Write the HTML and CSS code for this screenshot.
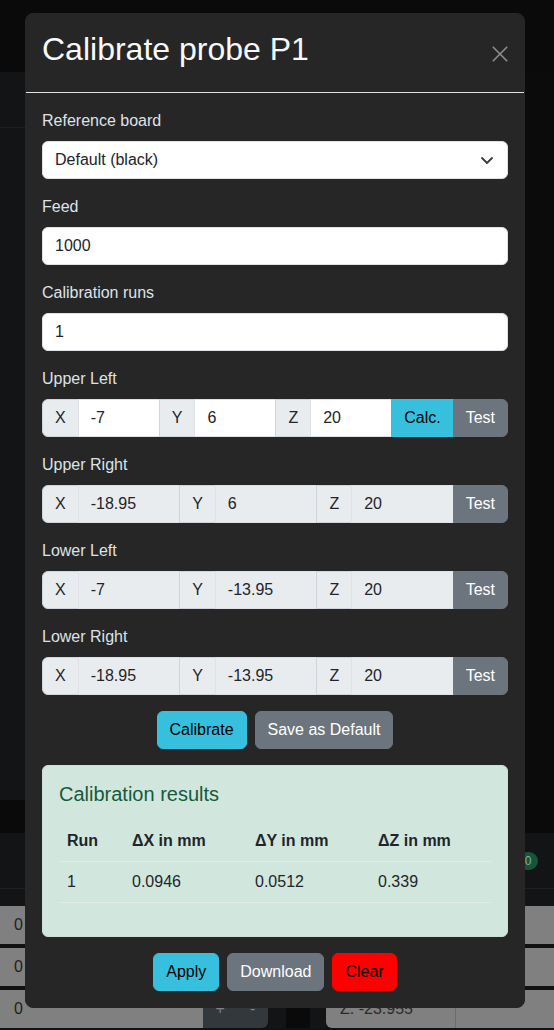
FILE: index.html
```html
<!DOCTYPE html>
<html lang="en">
<head>
<meta charset="utf-8">
<title>Calibrate probe P1</title>
<link rel="stylesheet" href="styles.css">
</head>
<body>
<div class="page-bg">
  <div class="bg-top"></div>
  <div class="bg-main">
    <div class="bg-left"><div class="bg-left-head"></div></div>
    <div class="bg-right"></div>
  </div>
  <div class="bg-strip"></div>
  <div class="bg-cardhead">
    <div class="bg-cardhead-top"><span class="bg-badge">0</span></div>
  </div>
  <div class="bg-rows">
    <div class="bg-row">
      <div class="bg-in bg-in-a">0</div>
      <div class="bg-btns"></div>
      <div class="bg-sp1"></div><div class="bg-sp2"></div><div class="bg-sp1 bg-sp3"></div>
      <div class="bg-in bg-in-b"></div>
      <div class="bg-in bg-in-c"></div>
    </div>
    <div class="bg-row">
      <div class="bg-in bg-in-a">0</div>
      <div class="bg-btns"></div>
      <div class="bg-sp1"></div><div class="bg-sp2"></div><div class="bg-sp1 bg-sp3"></div>
      <div class="bg-in bg-in-b"></div>
      <div class="bg-in bg-in-c"></div>
    </div>
    <div class="bg-row">
      <div class="bg-in bg-in-a">0</div>
      <div class="bg-btns"><span>+</span><span>-</span></div>
      <div class="bg-sp1"></div><div class="bg-sp2"></div><div class="bg-sp1 bg-sp3"></div>
      <div class="bg-in bg-in-b">Z: -23.955</div>
      <div class="bg-in bg-in-c"></div>
    </div>
  </div>
</div>

<div class="modal">
  <div class="modal-header">
    <h1 class="modal-title">Calibrate probe P1</h1>
    <button class="btn-close" type="button" aria-label="Close">
      <svg width="16" height="16" viewBox="0 0 16 16"><path d="M0.8 0.8 15.2 15.2M15.2 0.8 0.8 15.2" stroke="#8e8e8e" stroke-width="1.6" fill="none"/></svg>
    </button>
  </div>
  <div class="modal-body">
    <div class="field">
      <label class="form-label">Reference board</label>
      <div class="form-select">
        <span>Default (black)</span>
        <svg width="16" height="12" viewBox="0 0 16 12"><path d="m3 4 5 5 5-5" fill="none" stroke="#343a40" stroke-width="1.8" stroke-linecap="round" stroke-linejoin="round"/></svg>
      </div>
    </div>
    <div class="field">
      <label class="form-label">Feed</label>
      <input class="form-control" value="1000">
    </div>
    <div class="field">
      <label class="form-label">Calibration runs</label>
      <input class="form-control" value="1">
    </div>

    <div class="field">
      <label class="form-label">Upper Left</label>
      <div class="input-group">
        <span class="ig-text">X</span><input class="ig-input" value="-7">
        <span class="ig-text">Y</span><input class="ig-input" value="6">
        <span class="ig-text">Z</span><input class="ig-input" value="20">
        <button class="btn btn-info" type="button">Calc.</button><button class="btn btn-secondary" type="button">Test</button>
      </div>
    </div>
    <div class="field">
      <label class="form-label">Upper Right</label>
      <div class="input-group">
        <span class="ig-text">X</span><input class="ig-input is-disabled" value="-18.95" disabled>
        <span class="ig-text">Y</span><input class="ig-input is-disabled" value="6" disabled>
        <span class="ig-text">Z</span><input class="ig-input is-disabled" value="20" disabled>
        <button class="btn btn-secondary" type="button">Test</button>
      </div>
    </div>
    <div class="field">
      <label class="form-label">Lower Left</label>
      <div class="input-group">
        <span class="ig-text">X</span><input class="ig-input is-disabled" value="-7" disabled>
        <span class="ig-text">Y</span><input class="ig-input is-disabled" value="-13.95" disabled>
        <span class="ig-text">Z</span><input class="ig-input is-disabled" value="20" disabled>
        <button class="btn btn-secondary" type="button">Test</button>
      </div>
    </div>
    <div class="field">
      <label class="form-label">Lower Right</label>
      <div class="input-group">
        <span class="ig-text">X</span><input class="ig-input is-disabled" value="-18.95" disabled>
        <span class="ig-text">Y</span><input class="ig-input is-disabled" value="-13.95" disabled>
        <span class="ig-text">Z</span><input class="ig-input is-disabled" value="20" disabled>
        <button class="btn btn-secondary" type="button">Test</button>
      </div>
    </div>

    <div class="btn-row">
      <button class="btn btn-info btn-solo" type="button">Calibrate</button>
      <button class="btn btn-secondary btn-solo" type="button">Save as Default</button>
    </div>

    <div class="results">
      <h5 class="results-title">Calibration results</h5>
      <table class="results-table">
        <colgroup><col class="c1"><col class="c2"><col class="c3"><col class="c4"></colgroup>
        <thead>
          <tr><th>Run</th><th>ΔX in mm</th><th>ΔY in mm</th><th>ΔZ in mm</th></tr>
        </thead>
        <tbody>
          <tr><td>1</td><td>0.0946</td><td>0.0512</td><td>0.339</td></tr>
        </tbody>
      </table>
    </div>

    <div class="btn-row btn-row-last">
      <button class="btn btn-info btn-solo" type="button">Apply</button>
      <button class="btn btn-secondary btn-solo" type="button">Download</button>
      <button class="btn btn-danger btn-solo" type="button">Clear</button>
    </div>
  </div>
</div>
</body>
</html>
```

FILE: styles.css
```css
* { box-sizing: border-box; }

html, body {
  margin: 0;
  padding: 0;
}

body {
  width: 554px;
  height: 1030px;
  overflow: hidden;
  background: #0b0b0b;
  font-family: "Liberation Sans", Arial, sans-serif;
  font-size: 16px;
  line-height: 24px;
  color: #212529;
}

/* ---------- dimmed page behind the modal ---------- */
.page-bg {
  display: flex;
  flex-direction: column;
  width: 554px;
  height: 1030px;
}
.bg-top { height: 72px; background: #0a0a0a; }
.bg-main { height: 728px; display: flex; }
.bg-left { width: 300px; background: #131416; }
.bg-left-head { height: 56px; border-bottom: 1px solid #1d1f22; }
.bg-right { flex: 1; background: #0b0b0b; }
.bg-strip { height: 33px; background: #0a0a0a; }
.bg-cardhead { height: 73px; background: #131416; }
.bg-cardhead-top {
  height: 56px;
  border-bottom: 1px solid #1e2023;
  display: flex;
  justify-content: flex-end;
  align-items: center;
  padding-right: 16px;
}
.bg-badge {
  width: 20px;
  height: 18px;
  border-radius: 9px;
  background: #16553a;
  color: #8aa99a;
  font-size: 12px;
  line-height: 18px;
  text-align: center;
}
.bg-rows {
  flex: 1;
  display: flex;
  flex-direction: column;
  gap: 4px;
  background: #101112;
}
.bg-row { height: 38px; display: flex; }
.bg-in {
  background: #808080;
  color: #1e1e1e;
  padding-left: 14px;
  line-height: 38px;
}
.bg-in-a { width: 203px; }
.bg-btns {
  width: 65px;
  background: #33383c;
  color: #7d8388;
  border-radius: 0 6px 6px 0;
  display: flex;
  justify-content: space-around;
  align-items: center;
}
.bg-sp1 { width: 18px; background: #131416; }
.bg-sp2 { width: 24px; background: #0a0a0a; }
.bg-sp3 { width: 16px; }
.bg-in-b { width: 129px; border-radius: 6px 0 0 6px; color: #2a2a2a; }
.bg-in-c { flex: 1; border-left: 1px solid #6c6c6c; }

/* ---------- modal ---------- */
.modal {
  position: fixed;
  top: 13px;
  left: 25px;
  width: 500px;
  background: #262626;
  border: 1px solid #262626;
  border-radius: 8px;
  color: #dee2e6;
}

.modal-header {
  display: flex;
  align-items: center;
  padding: 16px;
  border-bottom: 1px solid #dee2e6;
}
.modal-title {
  margin: 0 0 8px 0;
  font-size: 32px;
  line-height: 38.4px;
  font-weight: 400;
  color: #f8f9fa;
}
.btn-close {
  margin-left: auto;
  width: 24px;
  height: 24px;
  padding: 4px;
  margin-right: -4px;
  margin-top: 1px;
  border: 0;
  background: transparent;
  display: flex;
}

.modal-body { padding: 16px; }

.field { margin-bottom: 16px; }
.form-label {
  display: block;
  margin-bottom: 8px;
  color: #dee2e6;
}

.form-select,
.form-control {
  display: flex;
  align-items: center;
  justify-content: space-between;
  width: 100%;
  height: 38px;
  padding: 6px 12px;
  background: #ffffff;
  border: 1px solid #dee2e6;
  border-radius: 6px;
  font-family: inherit;
  font-size: 16px;
  line-height: 24px;
  color: #212529;
}
.form-select svg { margin-right: 0; }

.input-group { display: flex; height: 38px; }
.input-group > * { margin-left: -1px; }
.input-group > *:first-child { margin-left: 0; border-radius: 6px 0 0 6px; }
.input-group > *:last-child { border-radius: 0 6px 6px 0; }

.ig-text {
  display: flex;
  align-items: center;
  padding: 6px 12px;
  background: #e9ecef;
  border: 1px solid #ced4da;
  color: #212529;
}
.ig-input {
  flex: 1 1 auto;
  width: 1%;
  min-width: 0;
  padding: 6px 12px;
  border: 1px solid #dee2e6;
  background: #ffffff;
  font-family: inherit;
  font-size: 16px;
  line-height: 24px;
  color: #212529;
  border-radius: 0;
}
.ig-input.is-disabled { background: #e9ecef; opacity: 1; }

.btn {
  font-family: inherit;
  font-size: 16px;
  line-height: 24px;
  padding: 6px 12px;
  border: 1px solid transparent;
  border-radius: 0;
  cursor: pointer;
}
.btn-solo { border-radius: 6px; }
.btn-info { background: #36c0de; border-color: #36c0de; color: #000; }
.btn-secondary { background: #6c757d; border-color: #6c757d; color: #fff; }
.btn-danger { background: #ff0000; border-color: #ff0000; color: #000; }

.btn-row {
  display: flex;
  justify-content: center;
  gap: 8px;
  margin-bottom: 16px;
}
.btn-row-last { margin-bottom: 0; }

/* ---------- results card ---------- */
.results {
  background: #d1e7dd;
  border: 1px solid #c9e1d6;
  border-radius: 6px;
  padding: 16px;
  margin-bottom: 16px;
}
.results-title {
  margin: 0 0 15px 0;
  font-size: 20px;
  line-height: 24px;
  font-weight: 400;
  color: #155a3a;
}
.results-table {
  width: 100%;
  border-collapse: collapse;
  margin-bottom: 17px;
  color: #212529;
}
.results-table th,
.results-table td {
  text-align: left;
  padding: 8px;
  border-bottom: 1px solid #e3ede8;
}
.results-table th { font-weight: 700; }
.c1 { width: 65px; }
.c2 { width: 123px; }
.c3 { width: 123px; }
```
